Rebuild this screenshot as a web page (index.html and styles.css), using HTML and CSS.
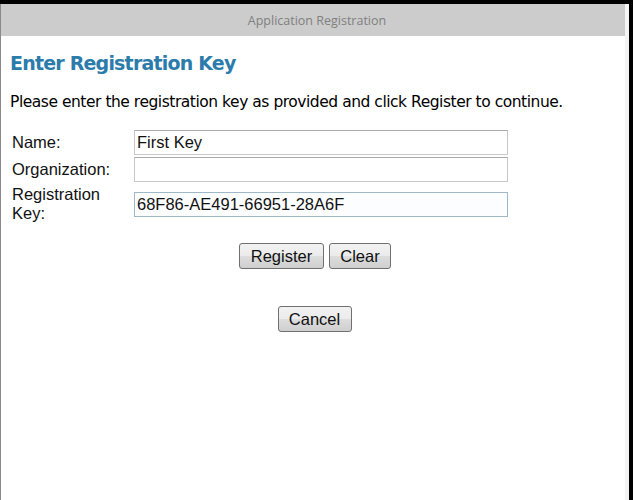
FILE: index.html
```html
<!DOCTYPE html>
<html>
<head>
<meta charset="utf-8">
<link rel="stylesheet" href="styles.css">
</head>
<body>
<div class="window">
  <div class="titlebar">Application Registration</div>
  <div class="content">
    <h1 class="heading">Enter Registration Key</h1>
    <p class="intro">Please enter the registration key as provided and click Register to continue.</p>
    <div class="form">
      <label class="label">Name:</label>
      <input class="field" type="text" value="First Key">
      <label class="label">Organization:</label>
      <input class="field" type="text" value="">
      <label class="label label-wrap">Registration Key:</label>
      <input class="field field-key" type="text" value="68F86-AE491-66951-28A6F">
    </div>
    <div class="actions">
      <button class="btn btn-register">Register</button>
      <button class="btn btn-clear">Clear</button>
    </div>
    <div class="actions actions-cancel">
      <button class="btn btn-cancel">Cancel</button>
    </div>
  </div>
</div>
</body>
</html>
```
FILE: styles.css
```css
html, body {
  margin: 0;
  padding: 0;
  background: #000;
  width: 633px;
  height: 500px;
  overflow: hidden;
}
.window {
  margin-top: 4px;
  margin-right: 4px;
  height: 496px;
  background: #fff;
  border-left: 1px solid #8a8a8a;
  border-right: 4px solid #f4f4f4;
  box-sizing: border-box;
  display: flex;
  flex-direction: column;
}
.titlebar {
  height: 32px;
  background: #cccccc;
  color: #808080;
  font-family: "Open Sans", "Noto Sans", sans-serif;
  font-size: 12.5px;
  display: flex;
  align-items: center;
  justify-content: center;
  padding-left: 8px;
}
.content {
  padding: 0 0 0 9px;
}
.heading {
  margin: 15px 0 0 0;
  font-family: "DejaVu Sans", sans-serif;
  font-weight: bold;
  font-size: 19px;
  letter-spacing: -0.8px;
  color: #2b7bab;
  line-height: 24px;
}
.intro {
  margin: 17px 0 0 0;
  font-family: "DejaVu Sans", sans-serif;
  font-size: 15.5px;
  letter-spacing: -0.47px;
  color: #000;
  line-height: 20px;
}
.form {
  margin-top: 18px;
  display: grid;
  grid-template-columns: 124px 374px;
  row-gap: 2px;
  align-items: center;
}
.label {
  font-family: "Liberation Sans", Arial, sans-serif;
  font-size: 16.5px;
  color: #111;
  padding-left: 2px;
  line-height: 19px;
}
.label-wrap {
  width: 100px;
  margin-top: 1px;
}
.field {
  height: 25px;
  box-sizing: border-box;
  border: 1px solid #c8c8c8;
  border-top-color: #a9a9a9;
  background: #fff;
  font-family: "Liberation Sans", Arial, sans-serif;
  font-size: 16.5px;
  color: #111;
  padding: 0 2px;
  margin: 0;
  outline: none;
}
.field-key {
  margin-top: 1px;
  height: 25px;
  border-color: #9fb8c8;
  background: #fcfdfe;
}
.actions {
  margin-top: 20px;
  display: flex;
  justify-content: center;
  gap: 5px;
  padding-right: 5px;
}
.actions-cancel {
  margin-top: 37px;
  padding-right: 6px;
}
.btn {
  height: 26px;
  box-sizing: border-box;
  border: 1px solid #707070;
  border-radius: 3px;
  background: linear-gradient(#f2f2f2 0%, #ebebeb 50%, #dddddd 51%, #cfcfcf 100%);
  font-family: "Liberation Sans", Arial, sans-serif;
  font-size: 16.5px;
  color: #111;
  padding: 0 6px;
  margin: 0;
}
.btn-register { width: 85px; }
.btn-clear { width: 62px; }
.btn-cancel { width: 74px; }
```
